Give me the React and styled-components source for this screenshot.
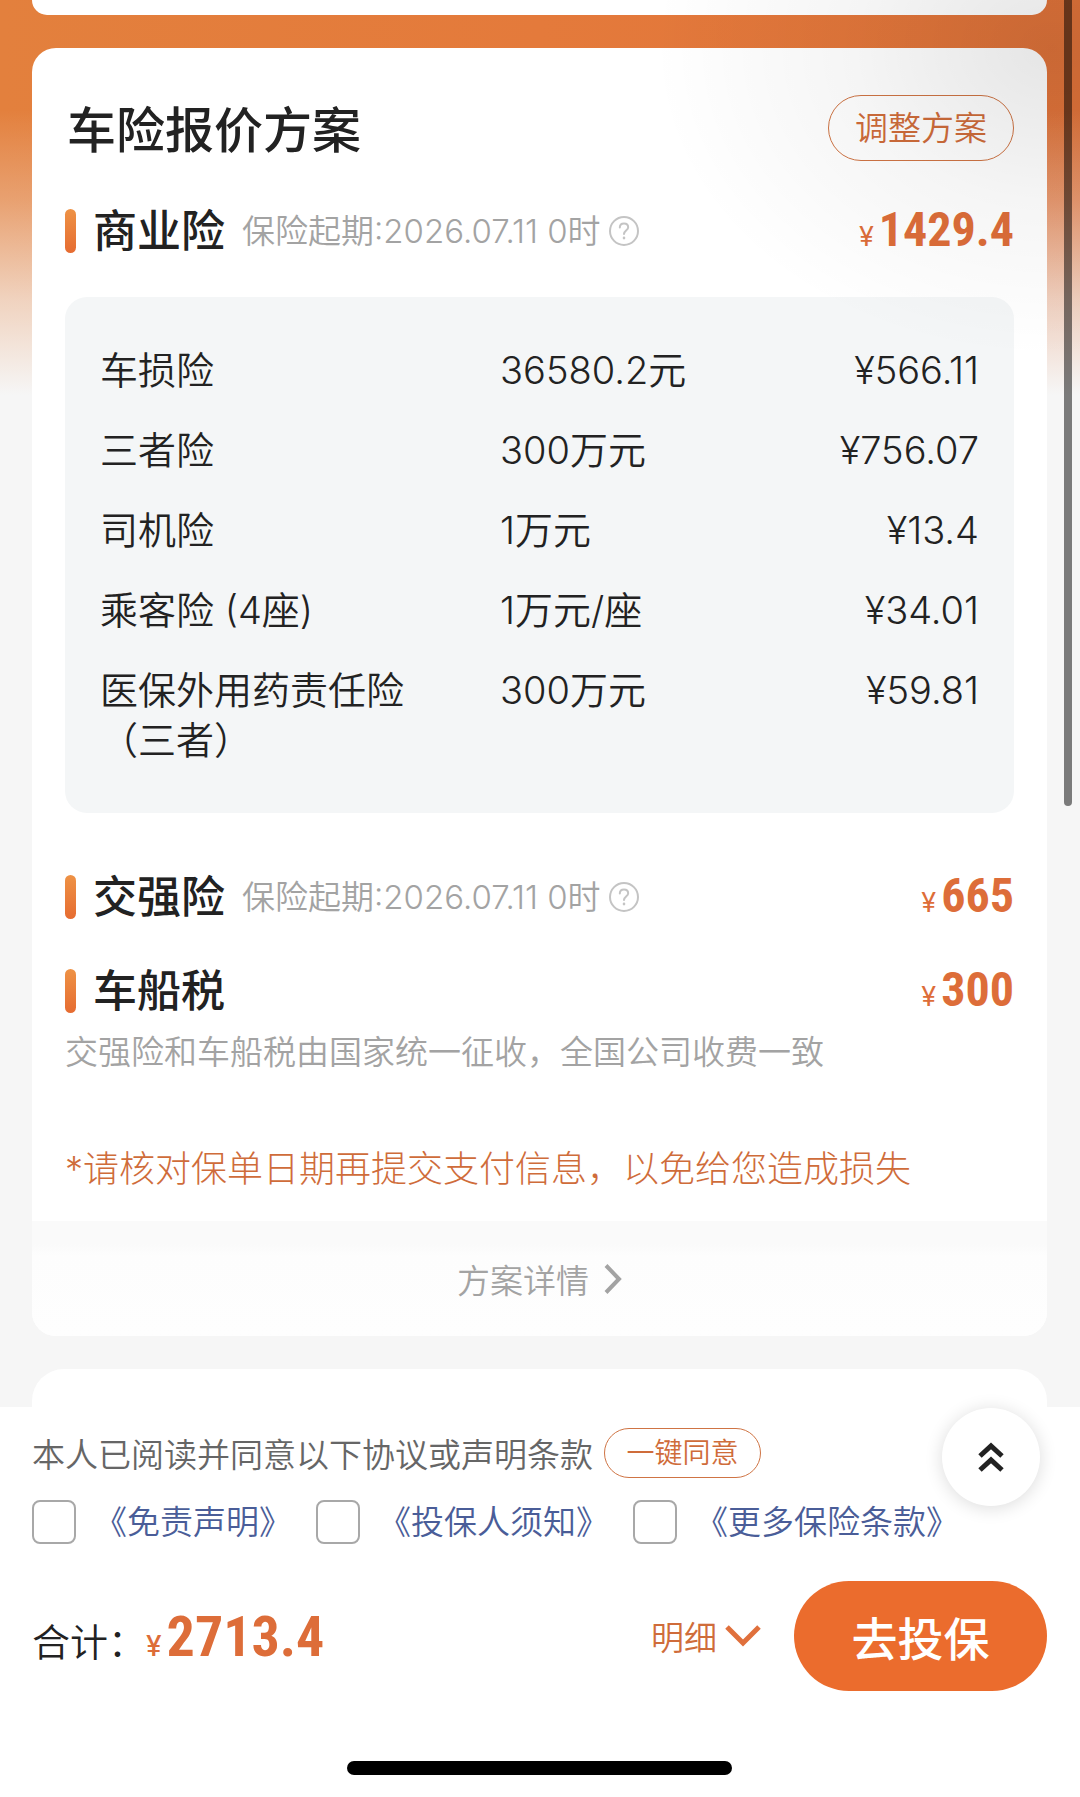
import React, { useState } from 'react';
import styled, { createGlobalStyle } from 'styled-components';

const GlobalStyle = createGlobalStyle`
  * {
    box-sizing: border-box;
  }

  body {
    margin: 0;
    background: #f6f6f6;
    font-family: Inter, 'Noto Sans CJK SC', sans-serif;
    font-weight: 350;
    color: #222;
  }

  h1, h2, p {
    margin: 0;
  }

  button {
    font-family: inherit;
    font-weight: inherit;
    padding: 0;
    cursor: pointer;
  }
`;

const Page = styled.div`
  position: relative;
  display: flex;
  flex-direction: column;
  height: 100vh;
  overflow: hidden;
  background:
    linear-gradient(180deg, rgba(246, 246, 246, 0) 110px, rgba(246, 246, 246, 0.28) 200px, rgba(246, 246, 246, 0.7) 300px, #f6f6f6 395px),
    linear-gradient(90deg, #e3803d 0%, #e47a3b 50%, #e0733a 100%);
`;

/* soft darkening in the upper right corner */
const Shade = styled.div`
  position: absolute;
  top: 0;
  right: 0;
  width: 460px;
  height: 400px;
  background: radial-gradient(ellipse 400px 310px at 94% 12%, rgba(0, 0, 0, 0.1), rgba(0, 0, 0, 0.04) 50%, rgba(0, 0, 0, 0) 100%);
  pointer-events: none;
`;

const ScrollThumb = styled.div`
  position: absolute;
  top: 0;
  right: 8px;
  width: 8px;
  height: 806px;
  border-radius: 0 0 4px 4px;
  background: rgba(0, 0, 0, 0.5);
`;

const Content = styled.main`
  flex: 1;
  min-height: 0;
  display: flex;
  flex-direction: column;
  gap: 33px;
  padding: 0 33px 0 32px;
  overflow: hidden;
`;

const PreviousCard = styled.section`
  flex-shrink: 0;
  height: 15px;
  border-radius: 0 0 24px 24px;
  background: #fff;
`;

const NextCard = styled.section`
  flex: 1;
  border-radius: 32px 32px 0 0;
  background: #fff;
`;

const Card = styled.section`
  flex-shrink: 0;
  border-radius: 24px;
  background: #fff;
  overflow: hidden;
`;

const CardBody = styled.div`
  padding: 47px 33px 26px;
`;

const CardHeader = styled.header`
  display: flex;
  align-items: center;
  justify-content: space-between;
  margin-bottom: 40px;
`;

const CardTitle = styled.h1`
  padding: 6px 0 0 2px;
  font-size: 49px;
  line-height: 60px;
  font-weight: 500;
`;

const OutlineButton = styled.button`
  border: 1px solid #cf7444;
  border-radius: 33px;
  background: transparent;
  color: #cf6c3a;
  width: ${({ $small }) => ($small ? '157px' : '186px')};
  height: ${({ $small }) => ($small ? '50px' : '66px')};
  font-size: ${({ $small }) => ($small ? '28px' : '33px')};
  line-height: 1;
`;

const SectionRow = styled.div`
  display: flex;
  align-items: center;
  height: 60px;
  margin-bottom: ${({ $gap }) => $gap};
`;

const Bar = styled.span`
  width: 11px;
  height: 44px;
  margin-right: 17px;
  border-radius: 6px;
  background: linear-gradient(180deg, #ee9245, #e66c31);
`;

const SectionTitle = styled.h2`
  font-size: 44px;
  line-height: 60px;
  font-weight: 500;
`;

const StartDate = styled.span`
  margin-left: 17px;
  font-size: 33px;
  line-height: 48px;
  color: #a3a3a3;
`;

const HelpButton = styled.button`
  display: flex;
  margin-left: 8px;
  border: none;
  background: none;
`;

const Price = styled.span`
  display: flex;
  align-items: baseline;
  gap: 5px;
  margin-left: auto;
  padding-top: 4px;
  color: #dd6d39;
  font-size: ${({ $large }) => ($large ? '28px' : '27px')};
  font-weight: ${({ $large }) => ($large ? 500 : 400)};
  line-height: 60px;

  b {
    font-family: 'Liberation Sans Narrow', 'Roboto Condensed', 'Open Sans Condensed', 'Roboto', sans-serif;
    font-weight: 700;
    font-size: ${({ $large }) => ($large ? '56px' : '48px')};
  }
`;

const CoveragePanel = styled.div`
  margin-bottom: 54px;
  padding: 33px 35px;
  border-radius: 22px;
  background: #f4f6f7;
`;

const CoverageTable = styled.table`
  width: 100%;
  table-layout: fixed;
  border-collapse: collapse;
  font-size: 38px;
  line-height: 50px;

  th, td {
    padding: 15px 0;
    font-weight: inherit;
    text-align: left;
    vertical-align: top;
  }

  th {
    width: 400px;
    padding-right: 64px;
  }

  td:last-child {
    text-align: right;
  }
`;

const Note = styled.p`
  font-size: 33px;
  line-height: 48px;
  color: #a3a3a3;
`;

const Warning = styled.p`
  margin-top: 67px;
  font-size: 36px;
  font-weight: 300;
  line-height: 52px;
  color: #cf6c3a;
`;

const DetailLink = styled.a`
  display: flex;
  align-items: center;
  justify-content: center;
  gap: 15px;
  height: 115px;
  background: linear-gradient(180deg, #fafafa 20%, #fdfdfd 30%, #fefefe);
  color: #a3a3a3;
  font-size: 33px;
  text-decoration: none;
`;

const Footer = styled.footer`
  position: relative;
  display: flex;
  flex-direction: column;
  padding: 21px 33px 22px 32px;
  background: #fff;
`;

const AgreeRow = styled.div`
  display: flex;
  align-items: center;
  gap: 11px;
  color: #666;
  font-size: 33px;
`;

const Agreements = styled.div`
  display: flex;
  gap: 24px;
  margin: 22px 0 37px;
`;

const Agreement = styled.div`
  display: flex;
  align-items: center;
  gap: 18px;
  font-size: 33px;
  line-height: 44px;

  input {
    appearance: none;
    width: 44px;
    height: 44px;
    margin: 0;
    border: 2px solid #a8a8a8;
    border-radius: 8px;
    background: #fff;
  }

  input:checked {
    border-color: #eb6c2d;
    background: #eb6c2d;
  }

  a {
    color: #4a5d98;
    text-decoration: none;
  }
`;

const TotalRow = styled.div`
  display: flex;
  align-items: center;
  margin-bottom: 70px;
`;

const Total = styled.div`
  display: flex;
  align-items: baseline;
  padding-top: 6px;
  font-size: 38px;
  line-height: 60px;
`;

const BreakdownButton = styled.button`
  display: flex;
  align-items: center;
  gap: 8px;
  margin-left: auto;
  border: none;
  background: none;
  color: #cf6c3a;
  font-size: 33px;
`;

const SubmitButton = styled.button`
  width: 253px;
  height: 110px;
  margin-left: 33px;
  border: none;
  border-radius: 55px;
  background: #eb6c2d;
  color: #fff;
  font-size: 46px;
  font-weight: 500;
`;

const TopButton = styled.button`
  position: absolute;
  top: 1px;
  right: 40px;
  display: flex;
  align-items: center;
  justify-content: center;
  width: 98px;
  height: 98px;
  border: none;
  border-radius: 50%;
  background: #fff;
  box-shadow: 0 2px 18px rgba(0, 0, 0, 0.14);
`;

const HomeIndicator = styled.div`
  align-self: center;
  width: 385px;
  height: 14px;
  border-radius: 7px;
  background: #000;
`;

const coverages = [
  { name: '车损险', amount: '36580.2元', price: '¥566.11' },
  { name: '三者险', amount: '300万元', price: '¥756.07' },
  { name: '司机险', amount: '1万元', price: '¥13.4' },
  { name: '乘客险 (4座)', amount: '1万元/座', price: '¥34.01' },
  { name: '医保外用药责任险（三者）', amount: '300万元', price: '¥59.81' },
];

const agreements = ['免责声明', '投保人须知', '更多保险条款'];

const HelpIcon = () => (
  <svg width="30" height="30" viewBox="0 0 30 30" fill="none" stroke="#c4c4c4" strokeWidth="2" strokeLinecap="round">
    <circle cx="15" cy="15" r="14" />
    <path d="M10.8 11.6c0-2.6 1.8-4.2 4.2-4.2s4.2 1.6 4.2 3.9c0 3-4.2 3.6-4.2 6.6" />
    <path d="M15 21.9v.2" strokeWidth="2.6" />
  </svg>
);

const InsuranceSection = ({ title, date, price, gap }) => (
  <SectionRow $gap={gap}>
    <Bar />
    <SectionTitle>{title}</SectionTitle>
    {date && (
      <>
        <StartDate>保险起期:{date}</StartDate>
        <HelpButton aria-label="保险起期说明"><HelpIcon /></HelpButton>
      </>
    )}
    <Price>¥<b>{price}</b></Price>
  </SectionRow>
);

const App = () => {
  const [accepted, setAccepted] = useState([]);

  const toggle = name => {
    setAccepted(prev => prev.includes(name) ? prev.filter(n => n !== name) : [...prev, name]);
  };

  return (
    <Page lang="zh-CN">
      <GlobalStyle />
      <Content>
        <PreviousCard />
        <Card>
          <CardBody>
            <CardHeader>
              <CardTitle>车险报价方案</CardTitle>
              <OutlineButton>调整方案</OutlineButton>
            </CardHeader>
            <InsuranceSection title="商业险" date="2026.07.11 0时" price="1429.4" gap="36px" />
            <CoveragePanel>
              <CoverageTable>
                <tbody>
                  {coverages.map(({ name, amount, price }) => (
                    <tr key={name}>
                      <th scope="row">{name}</th>
                      <td>{amount}</td>
                      <td>{price}</td>
                    </tr>
                  ))}
                </tbody>
              </CoverageTable>
            </CoveragePanel>
            <InsuranceSection title="交强险" date="2026.07.11 0时" price="665" gap="34px" />
            <InsuranceSection title="车船税" price="300" gap="7px" />
            <Note>交强险和车船税由国家统一征收，全国公司收费一致</Note>
            <Warning>*请核对保单日期再提交支付信息，以免给您造成损失</Warning>
          </CardBody>
          <DetailLink href="#detail">
            方案详情
            <svg width="18" height="30" viewBox="0 0 18 30" fill="none" stroke="#a3a3a3" strokeWidth="4">
              <path d="M2 1.5L15 15L2 28.5" />
            </svg>
          </DetailLink>
        </Card>
        <NextCard />
      </Content>

      <Footer>
        <AgreeRow>
          本人已阅读并同意以下协议或声明条款
          <OutlineButton $small onClick={() => setAccepted(agreements)}>一键同意</OutlineButton>
        </AgreeRow>
        <Agreements>
          {agreements.map(name => (
            <Agreement key={name}>
              <input
                type="checkbox"
                aria-label={name}
                checked={accepted.includes(name)}
                onChange={() => toggle(name)}
              />
              <a href="#terms">《{name}》</a>
            </Agreement>
          ))}
        </Agreements>
        <TotalRow>
          <Total>
            合计：
            <Price $large>¥<b>2713.4</b></Price>
          </Total>
          <BreakdownButton>
            明细
            <svg width="36" height="22" viewBox="0 0 36 22" fill="none" stroke="#e0703c" strokeWidth="5">
              <path d="M2 2L18 18L34 2" />
            </svg>
          </BreakdownButton>
          <SubmitButton>去投保</SubmitButton>
        </TotalRow>
        <HomeIndicator />
        <TopButton aria-label="回到顶部">
          <svg width="26" height="30" viewBox="0 0 26 30" fill="none" stroke="#222" strokeWidth="5">
            <path d="M2 14L13 4L24 14" />
            <path d="M2 28L13 18L24 28" />
          </svg>
        </TopButton>
      </Footer>

      <Shade />
      <ScrollThumb />
    </Page>
  );
};

export default App;
